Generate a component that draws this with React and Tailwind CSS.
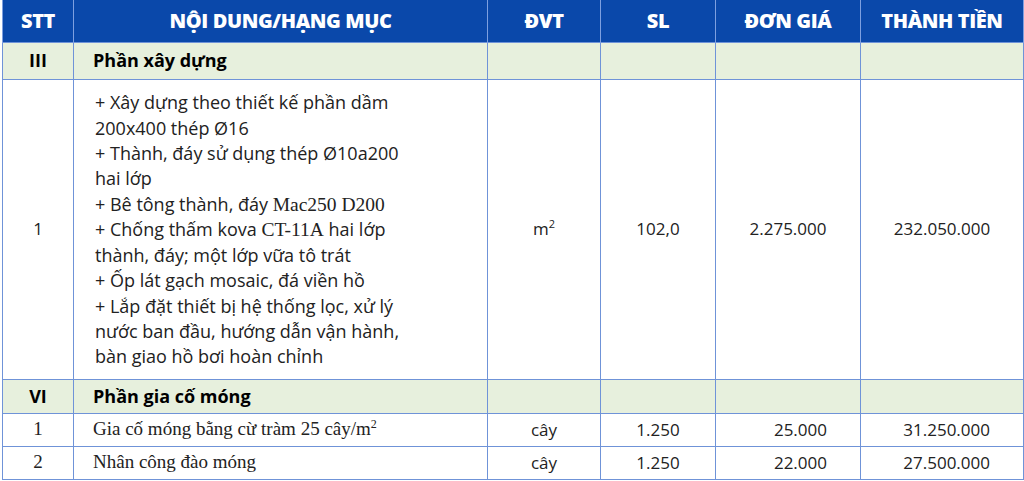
import React from "react";

const Serif = ({ children }) => (
  <span className="font-['Liberation_Serif',serif] text-[19.5px]">{children}</span>
);

const headers = ["STT", "NỘI DUNG/HẠNG MỤC", "ĐVT", "SL", "ĐƠN GIÁ", "THÀNH TIỀN"];

const App = () => {
  const cell = "border border-[#6f93d8] px-0";
  return (
    <div className="w-[1024px] h-[481px] bg-white pl-[2px] font-['Open_Sans',sans-serif] text-[#222]">
      <table className="table-fixed border-collapse w-[1021px]">
        <colgroup>
          <col className="w-[71px]" />
          <col className="w-[414px]" />
          <col className="w-[113px]" />
          <col className="w-[115px]" />
          <col className="w-[145px]" />
          <col className="w-[163px]" />
        </colgroup>
        <thead>
          <tr className="h-[42px] bg-[#0a48aa]">
            {headers.map((h) => (
              <th
                key={h}
                className="border-x border-[#7d9fe0] border-t-0 text-white text-[20px] font-extrabold tracking-[-0.4px] text-center align-middle"
              >
                {h}
              </th>
            ))}
          </tr>
        </thead>
        <tbody className="text-[17px]">
          {/* Phần xây dựng */}
          <tr className="h-[37px] bg-[#e7f0dd]">
            <td className={`${cell} text-center font-bold text-[18px] text-black`}>III</td>
            <td className={`${cell} pl-[19px] font-bold text-[18px] text-black`}>Phần xây dựng</td>
            <td className={cell}></td>
            <td className={cell}></td>
            <td className={cell}></td>
            <td className={cell}></td>
          </tr>
          <tr className="h-[300px]">
            <td className={`${cell} text-center`}>1</td>
            <td className={`${cell} pl-[21px] align-middle`}>
              <div className="leading-[25.4px] text-[18px] whitespace-nowrap pt-[2px]">
                + Xây dựng theo thiết kế phần dầm
                <br />
                200x400 thép Ø16
                <br />
                + Thành, đáy sử dụng thép Ø10a200
                <br />
                hai lớp
                <br />
                + Bê tông thành, đáy <Serif>Mac250 D200</Serif>
                <br />
                + Chống thấm kova <Serif>CT-11A</Serif> hai lớp
                <br />
                thành, đáy; một lớp vữa tô trát
                <br />
                + Ốp lát gạch mosaic, đá viền hồ
                <br />
                + Lắp đặt thiết bị hệ thống lọc, xử lý
                <br />
                nước ban đầu, hướng dẫn vận hành,
                <br />
                bàn giao hồ bơi hoàn chỉnh
              </div>
            </td>
            <td className={`${cell} text-center`}>
              m<sup className="text-[11px] -top-[7px]">2</sup>
            </td>
            <td className={`${cell} text-center`}>102,0</td>
            <td className={`${cell} text-center`}>2.275.000</td>
            <td className={`${cell} text-center`}>232.050.000</td>
          </tr>
          {/* Phần gia cố móng */}
          <tr className="h-[34px] bg-[#e7f0dd]">
            <td className={`${cell} text-center font-bold text-[18px] text-black`}>VI</td>
            <td className={`${cell} pl-[19px] font-bold text-[18px] text-black`}>Phần gia cố móng</td>
            <td className={cell}></td>
            <td className={cell}></td>
            <td className={cell}></td>
            <td className={cell}></td>
          </tr>
          <tr className="h-[33px]">
            <td className={`${cell} text-center font-['Liberation_Serif',serif] text-[19px]`}>1</td>
            <td className={`${cell} pl-[19px] font-['Liberation_Serif',serif] text-[19px]`}>
              Gia cố móng bằng cừ tràm 25 cây/m<sup className="text-[12px] -top-[7px]">2</sup>
            </td>
            <td className={`${cell} text-center`}>cây</td>
            <td className={`${cell} text-center`}>1.250</td>
            <td className={`${cell} text-right pr-[33px]`}>25.000</td>
            <td className={`${cell} text-right pr-[33px]`}>31.250.000</td>
          </tr>
          <tr className="h-[33px]">
            <td className={`${cell} text-center font-['Liberation_Serif',serif] text-[19px]`}>2</td>
            <td className={`${cell} pl-[19px] font-['Liberation_Serif',serif] text-[19px]`}>Nhân công đào móng</td>
            <td className={`${cell} text-center`}>cây</td>
            <td className={`${cell} text-center`}>1.250</td>
            <td className={`${cell} text-right pr-[33px]`}>22.000</td>
            <td className={`${cell} text-right pr-[33px]`}>27.500.000</td>
          </tr>
        </tbody>
      </table>
    </div>
  );
};

export default App;
